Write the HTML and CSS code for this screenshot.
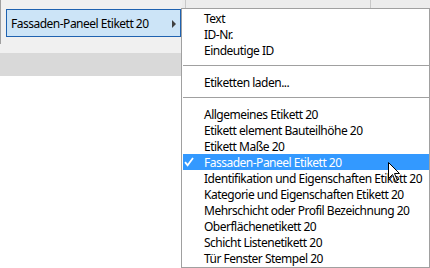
FILE: index.html
```html
<!DOCTYPE html>
<html lang="de">
<head>
    <meta charset="UTF-8">
    <title>Etikett Menü</title>
    <link rel="stylesheet" href="styles.css">
</head>
<body>
    <div class="screen">
        <div class="toolbar">
            <div class="edge"></div>
            <div class="picker">
                <span>Fassaden-Paneel Etikett 20</span>
                <i class="arrow"></i>
            </div>
            <div class="cols">
                <div class="col col-a"></div>
                <div class="col col-b"></div>
            </div>
        </div>
        <div class="band"></div>

        <!-- Untermenü liegt über der Werkzeugleiste -->
        <ul class="menu">
            <li>Text</li>
            <li>ID-Nr.</li>
            <li>Eindeutige ID</li>
            <li class="sep"></li>
            <li>Etiketten laden...</li>
            <li class="sep"></li>
            <li>Allgemeines Etikett 20</li>
            <li>Etikett element Bauteilhöhe 20</li>
            <li>Etikett Maße 20</li>
            <li class="active">
                <svg class="check" width="10" height="10" viewBox="0 0 10 10"><path d="M1 5.2 L3.6 8.2 L9 1" fill="none" stroke="#fff" stroke-width="1.8"/></svg>
                Fassaden-Paneel Etikett 20
            </li>
            <li>Identifikation und Eigenschaften Etikett 20</li>
            <li>Kategorie und Eigenschaften Etikett 20</li>
            <li>Mehrschicht oder Profil Bezeichnung 20</li>
            <li>Oberflächenetikett 20</li>
            <li>Schicht Listenetikett 20</li>
            <li>Tür Fenster Stempel 20</li>
        </ul>

        <svg class="cursor" width="13" height="21" viewBox="0 0 13 21">
            <path d="M0.5 0.5 L0.5 16.5 L4.5 12.5 L7.5 19.5 L9.5 18.5 L6.5 11.5 L11.5 11.5 Z" fill="#fff" stroke="#000" stroke-width="1"/>
        </svg>
    </div>
</body>
</html>
```

FILE: styles.css
```css
* {
    margin: 0;
    padding: 0;
    box-sizing: border-box;
}

body {
    font-family: "Noto Sans", "Liberation Sans", sans-serif;
    font-size: 12px;
    letter-spacing: -0.5px;
    color: #000;
    background: #fff;
}

.screen {
    width: 430px;
    height: 268px;
    position: relative;
    overflow: hidden;
}

.toolbar {
    height: 53px;
    background: #f0f0f0;
    display: flex;
    align-items: flex-start;
}

.toolbar .edge {
    width: 1px;
    height: 44px;
    background: #a0a0a0;
}

.picker {
    width: 175px;
    height: 28px;
    margin: 9px 0 0 5px;
    border: 1px solid #1f62b0;
    background: #cce4f7;
    display: flex;
    align-items: center;
    justify-content: space-between;
    padding: 0 4px 0 4px;
}

.picker .arrow {
    width: 0;
    height: 0;
    border-top: 4px solid transparent;
    border-bottom: 4px solid transparent;
    border-left: 4px solid #404040;
    margin-top: 1px;
}

.cols {
    flex: 1;
    height: 8px;
    margin-left: 1px;
    background: #ececec;
    display: flex;
}

.col {
    height: 8px;
    border-right: 1px solid #c8c8c8;
}

.col-a {
    width: 4px;
}

.col-b {
    width: 185px;
}

.band {
    height: 23px;
    background: #d9d9d9;
}

/* Kontextmenü */
.menu {
    position: absolute;
    left: 181px;
    top: 8px;
    width: 249px;
    bottom: 0;
    list-style: none;
    background: #fff;
    border: 1px solid #a0a0a0;
    padding: 1px 0 0 1px;
}

.menu li {
    height: 16px;
    line-height: 17px;
    padding-left: 21px;
    white-space: nowrap;
    position: relative;
}

.menu li.sep {
    height: 1px;
    margin: 7px 0 8px 0;
    background: #a0a0a0;
    padding: 0;
}

.menu li.active {
    background: #3399ff;
    color: #fff;
}

.menu .check {
    position: absolute;
    left: 1px;
    top: 3px;
}

.cursor {
    position: absolute;
    left: 388px;
    top: 162px;
}
```
